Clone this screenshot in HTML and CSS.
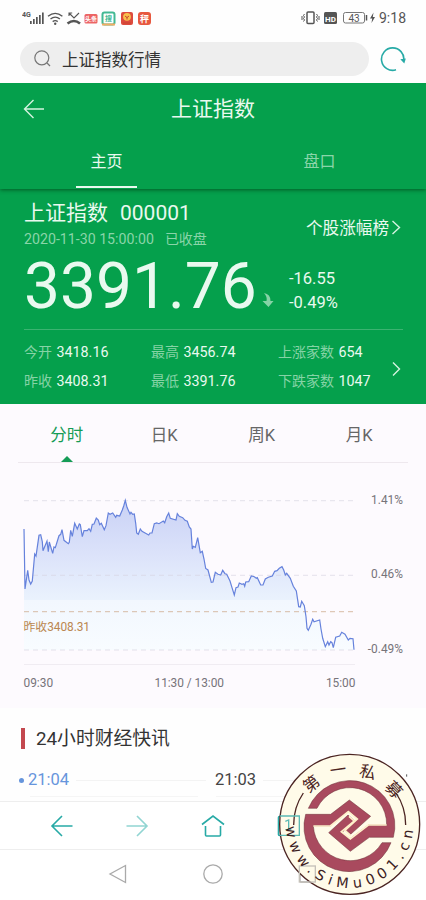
FILE: index.html
```
<!DOCTYPE html>
<html lang="zh">
<head>
  <meta charset="UTF-8">
  <meta name="viewport" content="width=device-width, initial-scale=1.0">
  <title>上证指数</title>
  <link rel="stylesheet" href="styles.css">
</head>
<body>
  <!-- 状态栏 -->
  <div class="status">
    <svg class="status-left" width="132" height="20" viewBox="0 0 132 20">
      <text x="0" y="8" class="net">4G</text>
      <g fill="#555">
        <rect x="8" y="12" width="1.7" height="3"/><rect x="11" y="10" width="1.7" height="5"/>
        <rect x="14" y="8" width="1.7" height="7"/><rect x="17" y="6" width="1.7" height="9"/><rect x="20" y="3.5" width="1.7" height="11.5"/>
      </g>
      <g fill="none" stroke="#555" stroke-width="1.4">
        <path d="M26 7.3q7.200-5.800 14.400 0M28.500 10q4.700-3.800 9.400 0M30.700 12.600q2.500-2 5 0"/>
        <path d="M47 4l5 5 5-5M47 7V4h3.200" stroke-width="1.100"/>
        <path d="M45.500 14.500q6.500-5 12.500 0" stroke-width="2.600"/>
      </g>
      <circle cx="33.200" cy="14.700" r="1.200" fill="#555"/>
      <rect x="62.500" y="5" width="13" height="9.500" rx="1.500" fill="#ec6464"/>
      <text x="69" y="12.300" class="app">头条</text>
      <rect x="80.500" y="3.500" width="12" height="12" rx="2" fill="#fff" stroke="#43b993" stroke-width="2"/>
      <path d="M80 15.500h13" stroke="#f3ad65" stroke-width="2"/>
      <text x="86.500" y="12.300" class="app app-green">搜</text>
      <rect x="99" y="3" width="12" height="13" rx="2" fill="#dd4b3e"/>
      <circle cx="105" cy="7.800" r="3.900" fill="#f8c14c"/><path d="M103 7l2 1.500 2-1.500M105 8v2.500M101 14h8" stroke="#c8442e" fill="none"/>
      <rect x="116" y="3" width="13" height="13" rx="3" fill="#e7583f"/>
      <text x="122.500" y="12.500" class="app app-big">秤</text>
    </svg>
    <svg class="status-right" width="106" height="20" viewBox="0 0 106 20">
      <rect x="6" y="3" width="7" height="11.500" rx="1" fill="none" stroke="#555" stroke-width="1.500"/>
      <path d="M3.500 5l-1 1.500 1 1.500-1 1.500 1 1.500-1 1.500M1 7v4M15.500 5l1 1.500-1 1.500 1 1.500-1 1.500 1 1.500M18 7v4" fill="none" stroke="#555" stroke-width="1"/>
      <rect x="23" y="3" width="13" height="12" rx="1.500" fill="#555"/>
      <text x="29.500" y="12.500" class="hd">HD</text>
      <rect x="42.500" y="3.500" width="21" height="10.500" rx="2" fill="none" stroke="#777"/>
      <path d="M65.500 6v5.500" stroke="#555" stroke-width="1.500"/>
      <text x="53" y="12.600" class="battery">43</text>
      <path d="M72.500 3.500L69 9.500h2.200l-.7 4.500 3.500-6h-2.200z" fill="#555"/>
      <text x="78" y="14" class="clock">9:18</text>
    </svg>
  </div>

  <!-- 搜索栏 -->
  <div class="search-row">
    <div class="search">
      <svg width="18" height="18" viewBox="0 0 18 18" fill="none" stroke="#777" stroke-width="1.200"><circle cx="7.800" cy="7.800" r="7"/><path d="M13 13l3 3"/></svg>
      <span>上证指数行情</span>
    </div>
    <svg width="26" height="26" viewBox="0 0 26 26"><path d="M16 23.800A11.200 11.200 0 1 1 23.800 14.500" fill="none" stroke="#27aaa6" stroke-width="1.600"/><path d="M20.300 13.200l5.500-.8-1.500 5z" fill="#27aaa6"/></svg>
  </div>

  <!-- 标题和标签 -->
  <header class="header">
    <div class="title-row">
      <svg class="back" width="22" height="20" viewBox="0 0 22 20"><path d="M21 10H1.500M10.500 1l-9 9 9 9"/></svg>
      <h1>上证指数</h1>
    </div>
    <nav class="tabs">
      <div class="tab active"><span>主页</span></div>
      <div class="tab"><span>盘口</span></div>
    </nav>
  </header>

  <!-- 行情 -->
  <section class="quote">
    <div class="quote-top">
      <div>
        <div class="name">上证指数<span>000001</span></div>
        <div class="time">2020-11-30 15:00:00<span>已收盘</span></div>
      </div>
      <div class="rank">个股涨幅榜<svg width="10" height="16" viewBox="0 0 10 16"><path d="M1.500 2l7 6.500-7 6.500"/></svg></div>
    </div>
    <div class="price-row">
      <div class="price">3391.76</div>
      <svg class="down" width="12" height="15" viewBox="0 0 12 15"><path d="M2 0Q8.500 1 8.500 8h3L6.500 14 0.500 8h4Q5.500 4 2 0z"/></svg>
      <div class="change">-16.55<br>-0.49%</div>
    </div>
    <div class="stats">
      <div class="stat">今开 <b>3418.16</b></div>
      <div class="stat">最高 <b>3456.74</b></div>
      <div class="stat">上涨家数 <b>654</b></div>
      <div class="stat">昨收 <b>3408.31</b></div>
      <div class="stat">最低 <b>3391.76</b></div>
      <div class="stat">下跌家数 <b>1047</b></div>
      <svg class="more" width="9" height="16" viewBox="0 0 9 16"><path d="M1 1.500l6.500 6.500L1 14.500"/></svg>
    </div>
  </section>

  <!-- 分时图 -->
  <section class="chart">
    <div class="chart-tabs">
      <div class="on">分时</div>
      <div>日K</div>
      <div>周K</div>
      <div>月K</div>
    </div>
    <svg width="426" height="245" viewBox="0 -22 426 245">
      <defs>
        <linearGradient id="area" gradientUnits="userSpaceOnUse" x1="0" y1="15" x2="0" y2="165">
          <stop offset="0" stop-color="#c9d1f5"/>
          <stop offset=".35" stop-color="#dbe2fa"/>
          <stop offset=".665" stop-color="#eaf2fd"/>
          <stop offset=".67" stop-color="#f2f7fe"/>
          <stop offset="1" stop-color="#f8fcff"/>
        </linearGradient>
      </defs>
      <polygon id="fill" fill="url(#area)"/>
      <g class="grid">
        <path d="M24 15.700H354M24 90.300H354M24 165H354"/>
        <path class="prev" d="M24 126.700H354"/>
        <path class="base" d="M24 179.500H355"/>
      </g>
      <polyline id="line" fill="none" stroke="#6682dc" stroke-width="1.200" points="24,44 25,104 27.700,85.300 29,95 30.700,99 32.300,96 34.700,69 36,71 39,50.300 40.700,49.700 42.300,56.700 43,65.700 47,56 48.300,66.700 49.300,57 52.700,68.300 54,62 55.300,62.700 59,50.700 60.700,49.300 62,44.700 64,55.300 68.300,58.700 69.300,57.300 70.700,45.300 72.300,51.300 74.700,38.300 77.300,44 79.300,39 80.300,39.700 82.300,51.700 84,45.700 87.300,45.700 89,43.700 90.700,46.300 92.300,39.300 94,39 96.300,33 98.300,35 99.700,39.700 101.300,38.300 104.300,44.700 106,40.700 108.300,28 110,29.300 112.700,28 115.700,32.300 116.700,30.300 119.700,31 122.300,25 123.700,21 125.300,15.300 127,22.300 130,29 131,27.300 132.700,29.300 134.300,29 135.700,38.300 136.700,48 138.300,49.300 140.300,44 142,46.300 148.700,50 150,48 152,48 154.300,38.700 156.700,38 159,38.700 163.300,36 164.700,37.700 166.700,31.700 168.700,28 170.300,33.300 176,35 177.300,28.700 179.300,31.300 182.700,32.700 185,35.300 187.300,36.300 189.300,42 191,44 192.300,64 193.300,61.300 195.300,62.300 197.700,52.700 200.300,67.700 202.300,66.300 204,74 205.700,83.500 208,85 211.300,97.300 213,97 215.300,87.300 218,89.300 220.700,90 222.700,85.300 225,88.700 226.700,89.300 230,96 232,102.700 234.300,110 236,102.700 238,102 239.300,98 242,99.300 243.700,98.700 244.700,101.300 245.700,97 248.700,96.700 251.300,91 254.300,91.700 256.300,93.300 257.300,92.700 260.700,100 263,100 265.300,94 268.300,92.300 272.300,91 274.700,86.300 277,85.700 279.300,83.300 282,81.700 283.700,85 285.300,90 286.700,88.300 290.300,93.300 293.300,101.300 296.300,106 298.700,121.700 300.300,122 301.700,116.300 304.300,120.700 306,131.700 307,143.300 308.300,145.300 311,139.300 312.700,134.300 314,136.700 319.700,135 321,144 322.700,153.300 325.300,161.700 327.700,156.700 329,160 330.700,156.700 332,157.700 333.300,162.700 335.700,152.300 339.700,151 341.700,147.300 345,149.300 348.300,155 350,153.300 353,153.700 354,164.700"/>
      <g class="label">
        <text x="403" y="18.500" text-anchor="end">1.41%</text>
        <text x="403" y="93.300" text-anchor="end">0.46%</text>
        <text x="403" y="168" text-anchor="end">-0.49%</text>
        <text x="23.500" y="202">09:30</text>
        <text x="154.500" y="202" textLength="69.500">11:30 / 13:00</text>
        <text x="355.500" y="202" text-anchor="end">15:00</text>
        <text x="23.500" y="146" class="prev-label" textLength="66.500">昨收3408.31</text>
      </g>
    </svg>
  </section>

  <!-- 快讯 -->
  <section class="news">
    <h2>24小时财经快讯</h2>
    <div class="timeline">
      <div class="moment now">21:04</div>
      <div class="moment">21:03</div>
    </div>
    <div class="cards"><i></i><i></i></div>
  </section>

  <!-- 浏览器工具栏 -->
  <div class="toolbar">
    <svg class="t-back" width="24" height="24" viewBox="0 0 24 24"><path d="M22.500 12H2M12 2L2 12l10 10"/></svg>
    <svg class="t-next" width="24" height="24" viewBox="0 0 24 24"><path d="M1.500 12H22M12 2l10 10-10 10"/></svg>
    <svg width="24" height="24" viewBox="0 0 24 24"><path d="M1 10.500L12 2l11 8.500M4.500 12v9q0 1 1 1h13q1 0 1-1v-9"/></svg>
    <svg width="24" height="24" viewBox="0 0 24 24"><rect x="2.500" y="2.500" width="19" height="19" rx="1"/><path d="M9 8l3-1.500V18M9 18h6"/></svg>
    <svg width="24" height="24" viewBox="0 0 24 24"></svg>
  </div>

  <!-- 系统导航 -->
  <div class="sysnav">
    <svg width="22" height="22" viewBox="0 0 22 22"><path d="M18.500 2.500v17L3 11z"/></svg>
    <svg width="22" height="22" viewBox="0 0 22 22"><circle cx="11" cy="11" r="9.200"/></svg>
    <svg width="22" height="22" viewBox="0 0 22 22"><rect x="3" y="3" width="16" height="16" rx="1"/></svg>
  </div>

  <!-- 印章 -->
  <svg class="seal" width="156" height="155" viewBox="0 0 468 465">
    <defs>
      <path id="arcBottom" d="M48 238A191 191 0 0 0 430 238"/>
    </defs>
    <circle cx="239" cy="238" r="210" fill="#fffbe9" stroke="#4b2422" stroke-width="4"/>
    <path d="M71 240A168 168 0 0 1 100 144M378 144A168 168 0 0 1 407 240" fill="none" stroke="#4b2422" stroke-width="4"/>
    <g fill="#a94a5e" stroke="#6b2f36" stroke-width="1.500">
      <path d="M115 190A135 135 0 0 1 370 277H298L241 319 176 263 234 210 256 229 216 262 239 282 295 240H350A110 110 0 0 0 141 190z"/>
      <path d="M107 208H182L238 165 302 214 242 268 225 254 264 222 236 198 181 243H130A111 111 0 0 0 336 293H363A135 135 0 0 1 107 208z"/>
    </g>
    <g fill="none" stroke="#fff0cb" stroke-width="5" stroke-linejoin="miter">
      <path d="M130 243H181L235 200 262 222 225 256 242 272"/>
      <path d="M350 240H295L241 282 214 260 253 228 237 214"/>
    </g>
    <!-- 右上角小点和透出的图标 -->
    <path d="M410 88v7" stroke="#555" stroke-width="3"/>
    <g fill="none" stroke-width="4">
      <path d="M30 213H88V271H30M46 229l10-4v29M46 254h18" stroke="#5bb9b4"/>
      <rect x="88" y="363" width="48" height="48" stroke="#c5c1b9"/>
    </g>
    <g class="seal-cn">
      <text transform="translate(124 117) rotate(-38)" y="17">第</text>
      <text transform="translate(204 75) rotate(-8)" y="17">一</text>
      <text transform="translate(293 82) rotate(14)" y="17">私</text>
      <text transform="translate(371 134) rotate(46)" y="17">募</text>
    </g>
    <text class="seal-url"><textPath href="#arcBottom" startOffset="7" textLength="575">www.SiMu001.cn</textPath></text>
  </svg>

  <script>
    // 折线下方的渐变区域
    const line = document.getElementById('line').getAttribute('points');
    document.getElementById('fill').setAttribute('points', line + ' 354,165 24,165');
  </script>
</body>
</html>
```
FILE: styles.css
```
body {
  margin: 0;
  width: 426px;
  height: 900px;
  overflow: hidden;
  position: relative;
  background-color: #fefefe;
  font-family: Roboto, 'Noto Sans CJK SC', sans-serif;
}

svg {
  display: block;
  flex: none;
}

/* 状态栏 */
.status {
  display: flex;
  justify-content: space-between;
  height: 42px;
  padding: 9px 19px 0 22px;
  box-sizing: border-box;
}

.net { font-size: 7px; font-weight: bold; fill: #555; }
.app { font-size: 6px; font-weight: bold; fill: #fff; text-anchor: middle; }
.app-green { font-size: 7px; fill: #43b993; }
.app-big { font-size: 9px; }
.hd { font-size: 8px; font-weight: bold; fill: #fff; text-anchor: middle; }
.battery { font-size: 10px; fill: #555; text-anchor: middle; }
.clock { font-size: 14px; fill: #555; }

/* 搜索栏 */
.search-row {
  display: flex;
  align-items: center;
  gap: 11px;
  height: 34px;
  padding: 0 20px 7px;
}

.search {
  display: flex;
  align-items: center;
  gap: 10px;
  width: 335px;
  height: 34px;
  padding-left: 14px;
  border-radius: 17px;
  background-color: #eee;
  color: #333;
  font-size: 16.5px;
}

/* 头部 */
.header {
  position: relative;
  height: 106px;
  background-color: #05a04c;
  color: #e9f9ef;
  box-shadow: 0 1px 4px rgba(0, 60, 20, 0.7);
  clip-path: inset(0 0 -6px 0);
}

.title-row {
  display: grid;
  grid-template-columns: 66px 1fr 66px;
  align-items: center;
  height: 50px;
}

.back {
  margin: 2px 0 0 23px;
  fill: none;
  stroke: #d5f3e0;
  stroke-width: 1.4;
}

h1 {
  margin: -3px 0 0;
  font-size: 21px;
  font-weight: 400;
  text-align: center;
}

.tabs {
  display: flex;
  height: 56px;
}

.tab {
  flex: 1;
  display: flex;
  justify-content: center;
  font-size: 16px;
  line-height: 58px;
  color: #8ad5a9;
}

.tab span {
  width: 61px;
  height: 53px;
  text-align: center;
}

.tab.active span {
  color: #e9f9ef;
  border-bottom: 2px solid #e9f9ef;
}

/* 行情 */
.quote {
  height: 215px;
  padding: 0 23px 0 24px;
  background-color: #05a04c;
  color: #e9f9ef;
}

.quote-top {
  display: flex;
  justify-content: space-between;
  height: 61px;
}

.name {
  padding-top: 10px;
  font-size: 21px;
  line-height: 28px;
}

.name span { margin-left: 12px; font-size: 21px; }

.time {
  font-size: 14.2px;
  line-height: 24px;
  color: #8ad5a9;
}

.time span { margin-left: 11px; font-size: 14px; }

.rank {
  display: flex;
  align-items: center;
  gap: 2px;
  height: 24px;
  margin: 26px 2px 0 0;
  font-size: 16.6px;
}

.rank svg, .more {
  fill: none;
  stroke: #d5f3e0;
  stroke-width: 1.4;
}

.price-row {
  display: flex;
  height: 79px;
  border-bottom: 1px solid #3bb371;
}

.price {
  width: 238px;
  font-size: 64px;
  line-height: 73px;
  white-space: nowrap;
}

.down {
  margin-top: 43px;
  fill: #86d3a6;
}

.change {
  margin: 17px 0 0 15px;
  font-size: 16.5px;
  line-height: 24px;
}

.stats {
  position: relative;
  display: grid;
  grid-template-columns: 127px 127px 1fr;
  grid-auto-rows: 29px;
  padding-top: 8px;
}

.stat {
  font-size: 14px;
  line-height: 29px;
  color: #86d3a6;
  white-space: nowrap;
}

.stat b {
  margin-left: 1px;
  font-size: 14.3px;
  font-weight: 400;
  color: #e9f9ef;
}

.more {
  position: absolute;
  right: 2px;
  top: 31px;
}

/* 分时图 */
.chart {
  height: 304px;
  background-color: #fdfafe;
}

.chart-tabs {
  display: flex;
  height: 58px;
  margin: 0 18px;
  border-bottom: 1px solid #eee8ee;
}

.chart-tabs div {
  position: relative;
  flex: 1;
  font-size: 16.5px;
  line-height: 64px;
  text-align: center;
  color: #666;
}

.chart-tabs .on { color: #159c56; }

.chart-tabs .on::after {
  content: '';
  position: absolute;
  left: 50%;
  bottom: 0;
  margin-left: -6px;
  border: 6px solid transparent;
  border-top: 0;
  border-bottom-color: #159c56;
}

.grid path {
  fill: none;
  stroke: #d5d3de;
  stroke-opacity: 0.65;
  stroke-dasharray: 5 4;
}

.grid .prev { stroke: #d3b59c; stroke-opacity: 0.9; }
.grid .base { stroke: #e9e5eb; stroke-dasharray: none; }

.label text {
  font-size: 11.9px;
  fill: #77747a;
}

.label .prev-label { fill: #bb8750; }

/* 快讯 */
.news {
  height: 93px;
  overflow: hidden;
}

h2 {
  margin: 17px 0 0 21px;
  padding-left: 11px;
  border-style: solid;
  border-width: 0 0 0 4px;
  border-image: linear-gradient(transparent 4px, #c3484f 4px, #c3484f 23px, transparent 23px) 1;
  font-size: 18.8px;
  font-weight: 400;
  line-height: 28px;
  color: #333;
}

.timeline {
  display: flex;
  margin-top: 15px;
  padding-left: 19px;
}

.moment {
  display: flex;
  align-items: center;
  gap: 7px;
  width: 187px;
  padding-left: 9px;
  box-sizing: border-box;
  flex: none;
  font-size: 16.5px;
  line-height: 24px;
  color: #444;
}

.moment::after {
  content: '';
  flex: 1;
  height: 1px;
  background-color: #f3f3f3;
}

.moment.now {
  position: relative;
  color: #6695dc;
}

.moment.now::before {
  content: '';
  position: absolute;
  left: 0;
  top: 10px;
  width: 5px;
  height: 5px;
  border-radius: 50%;
  background-color: #6695dc;
}

.cards {
  display: flex;
  gap: 18px;
  padding: 4px 0 0 30px;
}

.cards i {
  width: 168px;
  height: 20px;
  box-sizing: border-box;
  border-top: 1px solid #f5f5f5;
}

/* 工具栏 */
.toolbar {
  display: flex;
  justify-content: space-between;
  align-items: center;
  height: 48px;
  padding: 0 51px 0 50px;
  box-sizing: border-box;
  border-top: 1px solid #eee;
  background-color: #fff;
  fill: none;
  stroke: #27aaa6;
  stroke-width: 1.6;
}

.toolbar .t-next { stroke: #91d5d2; }

/* 系统导航 */
.sysnav {
  display: flex;
  justify-content: center;
  gap: 73px;
  height: 51px;
  padding-top: 13px;
  box-sizing: border-box;
  border-top: 1px solid #eee;
  background-color: #fff;
  fill: none;
  stroke: #aaa;
  stroke-width: 1.3;
}

/* 印章 */
.seal {
  position: absolute;
  left: 270px;
  top: 745px;
}

.seal-cn text {
  font-family: 'Noto Sans CJK SC', sans-serif;
  font-size: 49px;
  text-anchor: middle;
  fill: #4b2422;
}

.seal-url {
  font-family: 'DejaVu Sans', sans-serif;
  font-size: 43px;
  fill: #3d211f;
}
```
